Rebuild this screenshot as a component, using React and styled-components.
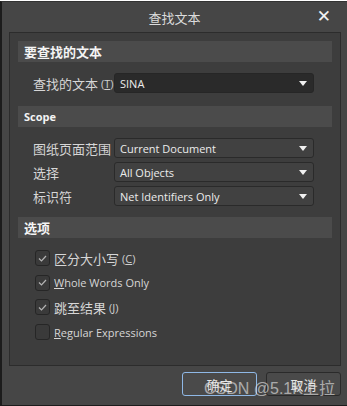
import React from 'react';
import styled, { createGlobalStyle } from 'styled-components';

const Global = createGlobalStyle`
  html, body { margin: 0; padding: 0; background: #ffffff; }
  body { font-family: "Open Sans", "Noto Sans CJK SC", sans-serif; }
`;

const Window = styled.div`
  position: relative;
  box-sizing: border-box;
  width: 347px;
  height: 406px;
  margin-top: 1px;
  background: #464646;
  border-left: 2px solid #1c1c1c;
  border-bottom: 2px solid #1c1c1c;
  border-top: 1px solid #333;
  display: flex;
  flex-direction: column;
`;

const TitleBar = styled.div`
  position: relative;
  height: 30px;
  display: flex;
  align-items: center;
  justify-content: center;
  color: #dcdcdc;
  font-size: 13px;
`;

const Close = styled.div`
  position: absolute;
  right: 16px;
  top: 4px;
  color: #f2f2f2;
  font-size: 17px;
  font-weight: 700;
  font-family: "DejaVu Sans", sans-serif;
`;

const Panel = styled.div`
  box-sizing: border-box;
  margin: 0 6px 0 7px;
  height: 334px;
  background: #3d3d3d;
  border: 1px solid #2c2c2c;
  padding: 8px 8px 0 8px;
  display: flex;
  flex-direction: column;
`;

const SectionHead = styled.div`
  height: 21px;
  background: #4b4b4b;
  color: #f4f4f4;
  font-weight: 700;
  font-size: ${(p) => (p.$small ? '11px' : '13px')};
  padding-left: 6px;
  display: flex;
  align-items: center;
  margin-bottom: 11px;
`;

const Rows = styled.div`
  display: flex;
  flex-direction: column;
  gap: 4px;
  margin-bottom: ${(p) => p.$after}px;
`;

const Row = styled.div`
  display: flex;
  align-items: center;
  height: 20px;
  padding-left: 15px;
`;

const Label = styled.div`
  width: 81px;
  color: #d6d6d6;
  font-size: 13px;
  white-space: nowrap;
  display: flex;
  align-items: center;
`;

const Key = styled.span`
  font-size: 11px;
  margin-left: 3px;
  color: #cfcfcf;
`;

const Select = styled.div`
  box-sizing: border-box;
  width: 200px;
  height: 20px;
  border-radius: 3px;
  background: ${(p) => (p.$dark ? '#2a2a2a' : '#414141')};
  border: 1px solid ${(p) => (p.$dark ? '#262626' : '#2a2a2a')};
  color: #ececec;
  font-size: 11px;
  display: flex;
  align-items: center;
  justify-content: space-between;
  padding: 0 6px 0 5px;
`;

const Caret = styled.span`
  width: 0;
  height: 0;
  border-left: 4px solid transparent;
  border-right: 4px solid transparent;
  border-top: 5px solid #f0f0f0;
`;

const Checks = styled.div`
  display: flex;
  flex-direction: column;
  gap: 8px;
  padding-left: 17px;
  margin-top: 1px;
`;

const CheckRow = styled.div`
  display: flex;
  align-items: center;
  height: 16.6px;
  color: #d6d6d6;
  font-size: ${(p) => (p.$cjk ? '13px' : '11px')};
`;

const Box = styled.div`
  box-sizing: border-box;
  width: 15px;
  height: 16px;
  border-radius: 3px;
  background: #3a3a3a;
  border: 1px solid #262626;
  margin-right: 4px;
  display: flex;
  align-items: center;
  justify-content: center;
`;

const U = styled.span`
  text-decoration: underline;
`;

const Footer = styled.div`
  display: flex;
  justify-content: flex-end;
  gap: 9px;
  padding: 6px 6px 0 0;
`;

const Button = styled.div`
  box-sizing: border-box;
  width: 75px;
  height: 24px;
  border-radius: 3px;
  background: #4a4a4a;
  border: 1px solid ${(p) => (p.$primary ? '#8fb8e6' : '#2a2a2a')};
  color: #e6e6e6;
  font-size: 13px;
  display: flex;
  align-items: center;
  justify-content: center;
`;

const Watermark = styled.div`
  position: absolute;
  left: 202px;
  top: 373px;
  font-family: "Liberation Sans", "Noto Sans CJK SC", sans-serif;
  font-size: 16px;
  color: rgba(235, 235, 235, 0.62);
  pointer-events: none;
  white-space: nowrap;
`;

const Tick = () => (
  <svg width="9" height="7" viewBox="0 0 9 7">
    <path d="M1 3.5 L3.5 6 L8 1" stroke="#b4b4b4" strokeWidth="1.2" fill="none" />
  </svg>
);

const scope = [
  ['图纸页面范围', 'Current Document'],
  ['选择', 'All Objects'],
  ['标识符', 'Net Identifiers Only'],
];

export default function App() {
  return (
    <>
      <Global />
      <Window>
        <TitleBar>
          查找文本
          <Close>✕</Close>
        </TitleBar>
        <Panel>
          <SectionHead>要查找的文本</SectionHead>
          <Rows $after={13}>
            <Row>
              <Label>
                查找的文本<Key>(<U>T</U>)</Key>
              </Label>
              <Select $dark>
                SINA
                <Caret />
              </Select>
            </Row>
          </Rows>
          <SectionHead $small>Scope</SectionHead>
          <Rows $after={11}>
            {scope.map(([l, v]) => (
              <Row key={l}>
                <Label>{l}</Label>
                <Select>
                  {v}
                  <Caret />
                </Select>
              </Row>
            ))}
          </Rows>
          <SectionHead>选项</SectionHead>
          <Checks>
            <CheckRow $cjk>
              <Box><Tick /></Box>区分大小写<Key>(<U>C</U>)</Key>
            </CheckRow>
            <CheckRow>
              <Box><Tick /></Box><U>W</U>hole Words Only
            </CheckRow>
            <CheckRow $cjk>
              <Box><Tick /></Box>跳至结果<Key>(<U>J</U>)</Key>
            </CheckRow>
            <CheckRow>
              <Box /><U>R</U>egular Expressions
            </CheckRow>
          </Checks>
        </Panel>
        <Footer>
          <Button $primary>确定</Button>
          <Button>取消</Button>
        </Footer>
        <Watermark>CSDN @5.1K上拉</Watermark>
      </Window>
    </>
  );
}
